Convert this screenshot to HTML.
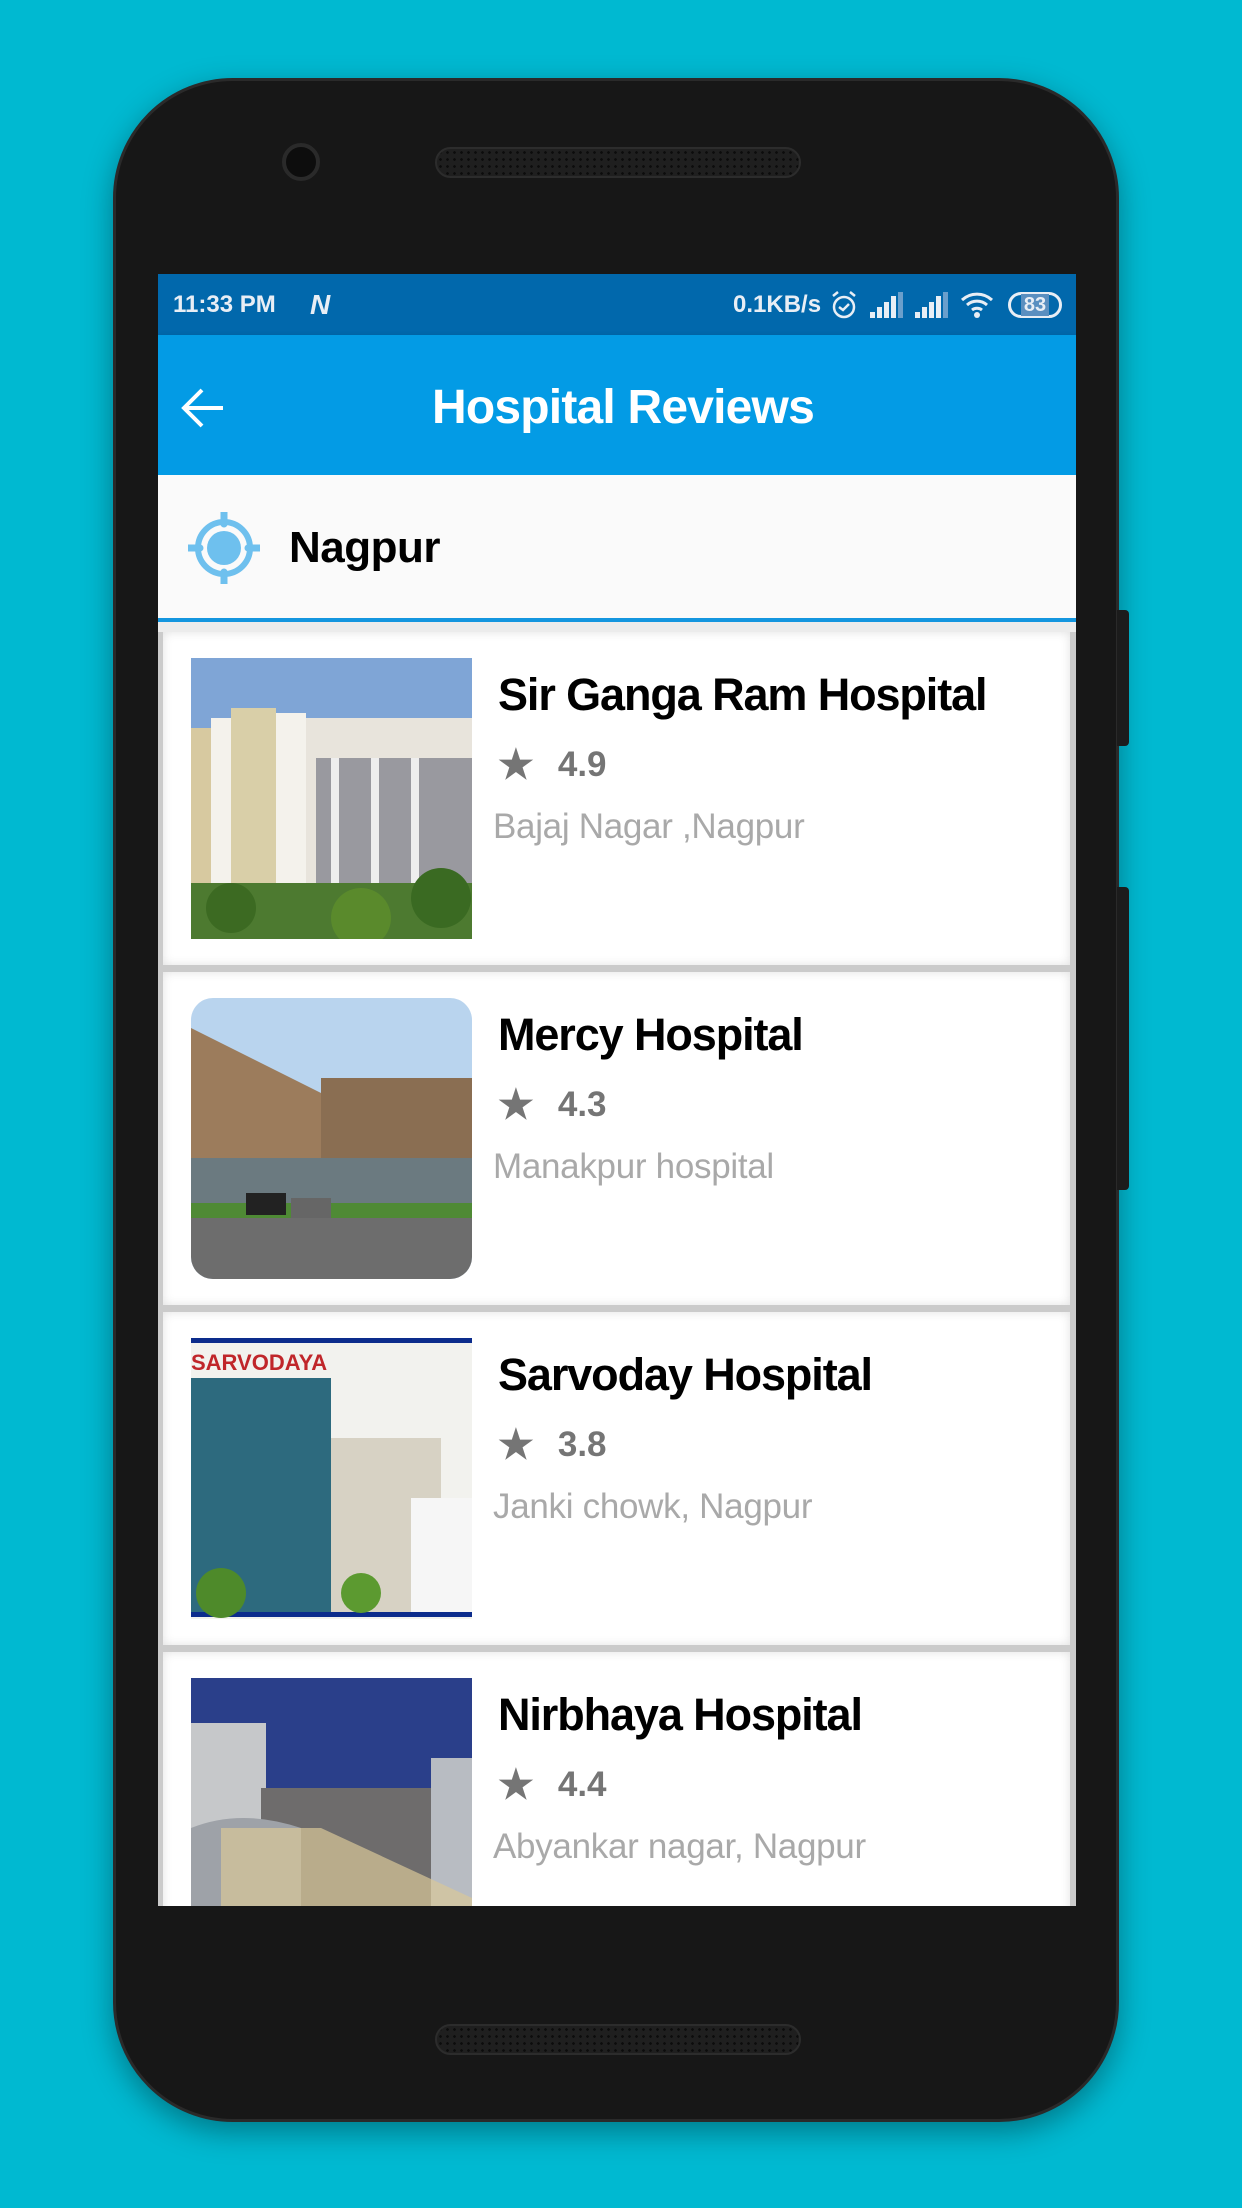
<!DOCTYPE html>
<html><head><meta charset="utf-8"><style>
*{margin:0;padding:0;box-sizing:border-box}
body{width:1242px;height:2208px;background:#00b9d1;position:relative;overflow:hidden;font-family:"Liberation Sans",Roboto,sans-serif}
.phone{position:absolute;left:113px;top:78px;width:1006px;height:2044px;background:#171717;border-radius:120px;border:3px solid #2a2a2a;box-shadow:0 10px 30px rgba(0,0,0,.35)}
.btn{position:absolute;left:1117px;width:12px;background:#1c1c1c;border-radius:0 4px 4px 0}
.speaker{position:absolute;left:435px;width:366px;height:31px;border-radius:16px;background:#1f1f1f;border:2px solid #2c2c2c;background-image:radial-gradient(#0c0c0c 1.2px,transparent 1.5px);background-size:7px 7px}
.cam{position:absolute;left:282px;top:143px;width:38px;height:38px;border-radius:50%;background:#0d0d0d;border:4px solid #2a2a2a}
.screen{position:absolute;left:158px;top:274px;width:918px;height:1632px;background:#ececec;overflow:hidden}
.status{height:61px;background:#0168ac;color:#e8eef5;font-weight:bold;font-size:24px;position:relative}
.appbar{height:140px;background:#039be5;position:relative;color:#fff;box-shadow:0 3px 6px rgba(0,0,0,.25)}
.appbar h1{position:absolute;left:0;right:0;text-align:center;top:45px;font-size:48px;font-weight:bold;letter-spacing:-.8px;padding-left:12px}
.loc{height:147px;background:#fafafa;border-bottom:4px solid #1496df;position:relative}
.loc span{position:absolute;left:131px;top:48px;font-size:44px;font-weight:bold;color:#000;letter-spacing:-.5px}
.list{position:absolute;top:358px;left:0;width:918px;height:1280px;background:#cbcbcb}
.card{position:absolute;left:5px;width:907px;height:333px;background:#fff;box-shadow:inset 0 0 10px rgba(0,0,0,.12)}
.card .img{position:absolute;left:28px;top:26px;width:281px;height:281px;overflow:hidden}
.card h2{position:absolute;left:335px;top:37px;font-size:45px;font-weight:bold;color:#000;letter-spacing:-1.1px}
.card .r{position:absolute;left:335px;top:108px;font-size:35px;font-weight:bold;color:#757575}
.card .r b{font-size:40px;margin-right:24px;position:relative;top:2px}
.card .a{position:absolute;left:330px;top:175px;font-size:35px;color:#a9a9a9;letter-spacing:-.3px}
</style></head><body>
<div class="phone"></div>
<div class="btn" style="top:610px;height:136px"></div>
<div class="btn" style="top:887px;height:303px"></div>
<div class="cam"></div>
<div class="speaker" style="top:147px"></div>
<div class="speaker" style="top:2024px"></div>
<div class="screen">
 <div class="status">
  <span style="position:absolute;left:15px;top:17px">11:33 PM</span>
  <span style="position:absolute;left:152px;top:15px;font-size:28px;font-weight:900;font-style:italic">N</span>
  <span style="position:absolute;left:575px;top:17px">0.1KB/s</span>
  <svg style="position:absolute;left:672px;top:16px" width="28" height="30" viewBox="0 0 28 30"><circle cx="14" cy="17" r="10" fill="none" stroke="#e8eef5" stroke-width="2.5"/><path d="M9 17l4 3 6-6M3 6l5-4M25 6l-5-4" stroke="#e8eef5" stroke-width="2.5" fill="none"/></svg>
  <svg style="position:absolute;left:712px;top:18px" width="34" height="26"><rect x="0" y="20" width="5" height="6" fill="#e8eef5"/><rect x="7" y="15" width="5" height="11" fill="#e8eef5"/><rect x="14" y="10" width="5" height="16" fill="#e8eef5"/><rect x="21" y="4" width="5" height="22" fill="#e8eef5"/><rect x="28" y="0" width="5" height="26" fill="#6a9fcc"/></svg>
  <svg style="position:absolute;left:757px;top:18px" width="34" height="26"><rect x="0" y="20" width="5" height="6" fill="#e8eef5"/><rect x="7" y="15" width="5" height="11" fill="#e8eef5"/><rect x="14" y="10" width="5" height="16" fill="#e8eef5"/><rect x="21" y="4" width="5" height="22" fill="#e8eef5"/><rect x="28" y="0" width="5" height="26" fill="#6a9fcc"/></svg>
  <svg style="position:absolute;left:802px;top:16px" width="36" height="30" viewBox="0 0 36 30"><path d="M2 10a22 22 0 0 1 30 0M7 15a15 15 0 0 1 20 0M12 20a8 8 0 0 1 10 0" stroke="#e8eef5" stroke-width="3" fill="none"/><circle cx="17" cy="25" r="3" fill="#e8eef5"/></svg>
  <div style="position:absolute;left:850px;top:18px;width:54px;height:26px;border:3px solid #e8eef5;border-radius:13px;font-size:20px;line-height:20px;text-align:center;color:#e8eef5"><span style="background:#5a8fc0;padding:0 3px">83</span></div>
 </div>
 <div class="appbar">
  <svg style="position:absolute;left:23px;top:53px" width="44" height="40" viewBox="0 0 44 40"><path d="M42 20H4M21 2L3 20l18 18" stroke="#fff" stroke-width="4" fill="none"/></svg>
  <h1>Hospital Reviews</h1>
 </div>
 <div class="loc">
  <svg style="position:absolute;left:30px;top:37px" width="72" height="72" viewBox="0 0 72 72"><circle cx="36" cy="36" r="26" fill="none" stroke="#6ec0ee" stroke-width="6"/><circle cx="36" cy="36" r="17" fill="#6ec0ee"/><path d="M36 0v12M36 60v12M0 36h12M60 36h12" stroke="#6ec0ee" stroke-width="7" stroke-linecap="round"/></svg>
  <span>Nagpur</span>
 </div>
 <div class="list">
  <div class="card" style="top:0">
   <div class="img"><svg width="281" height="281"><rect width="281" height="281" fill="#7fa5d6"/><rect x="0" y="70" width="90" height="170" fill="#d7c9a0"/><rect x="20" y="60" width="60" height="180" fill="#f4f2ec"/><rect x="40" y="50" width="45" height="190" fill="#d9cfa8"/><rect x="85" y="55" width="30" height="185" fill="#f4f2ec"/><rect x="115" y="60" width="170" height="190" fill="#e8e4dc"/><rect x="125" y="100" width="160" height="130" fill="#4a4e62" opacity=".5"/><rect x="140" y="100" width="8" height="130" fill="#eee"/><rect x="180" y="100" width="8" height="130" fill="#eee"/><rect x="220" y="100" width="8" height="130" fill="#eee"/><rect x="0" y="225" width="281" height="56" fill="#4d7a30"/><circle cx="40" cy="250" r="25" fill="#3c6a22"/><circle cx="170" cy="260" r="30" fill="#5a8a2c"/><circle cx="250" cy="240" r="30" fill="#3a6a22"/></svg></div>
   <h2>Sir Ganga Ram Hospital</h2><div class="r"><b>★</b>4.9</div><div class="a">Bajaj Nagar ,Nagpur</div>
  </div>
  <div class="card" style="top:340px">
   <div class="img" style="border-radius:22px"><svg width="281" height="281"><rect width="281" height="281" fill="#b9d4ee"/><polygon points="0,30 160,110 160,210 0,210" fill="#9c7c5c"/><rect x="130" y="80" width="151" height="130" fill="#8a6e52"/><rect x="0" y="160" width="281" height="60" fill="#6b7a80"/><rect x="0" y="205" width="281" height="20" fill="#4f8a35"/><rect x="0" y="220" width="281" height="61" fill="#6d6d6d"/><rect x="55" y="195" width="40" height="22" fill="#222"/><rect x="100" y="200" width="40" height="20" fill="#666"/></svg></div>
   <h2>Mercy Hospital</h2><div class="r"><b>★</b>4.3</div><div class="a">Manakpur hospital</div>
  </div>
  <div class="card" style="top:680px">
   <div class="img"><svg width="281" height="281"><rect width="281" height="281" fill="#f2f2ee"/><rect y="0" width="281" height="5" fill="#0c2c8c"/><rect y="274" width="281" height="5" fill="#0c2c8c"/><text x="0" y="32" font-family="Liberation Sans" font-weight="bold" font-size="22" fill="#c0262a">SARVODAYA</text><rect x="0" y="40" width="140" height="234" fill="#2d6a7e"/><rect x="140" y="100" width="110" height="174" fill="#d7d2c4"/><rect x="220" y="160" width="61" height="114" fill="#f6f6f6"/><circle cx="30" cy="255" r="25" fill="#4e8a2a"/><circle cx="170" cy="255" r="20" fill="#5c9a30"/></svg></div>
   <h2>Sarvoday Hospital</h2><div class="r"><b>★</b>3.8</div><div class="a">Janki chowk, Nagpur</div>
  </div>
  <div class="card" style="top:1020px">
   <div class="img"><svg width="281" height="281"><rect width="281" height="281" fill="#2a3f8a"/><rect x="0" y="45" width="75" height="236" fill="#c6c8ca"/><rect x="70" y="110" width="211" height="171" fill="#6e6c6c"/><rect x="240" y="80" width="41" height="201" fill="#b8bcc2"/><path d="M0 150q50-20 110 0v131H0z" fill="#9ea2a8"/><path d="M30 150L130 150 281 220 281 281 30 281z" fill="#d9c898" opacity=".7"/></svg></div>
   <h2>Nirbhaya Hospital</h2><div class="r"><b>★</b>4.4</div><div class="a">Abyankar nagar, Nagpur</div>
  </div>
 </div>
</div>
</body></html>
